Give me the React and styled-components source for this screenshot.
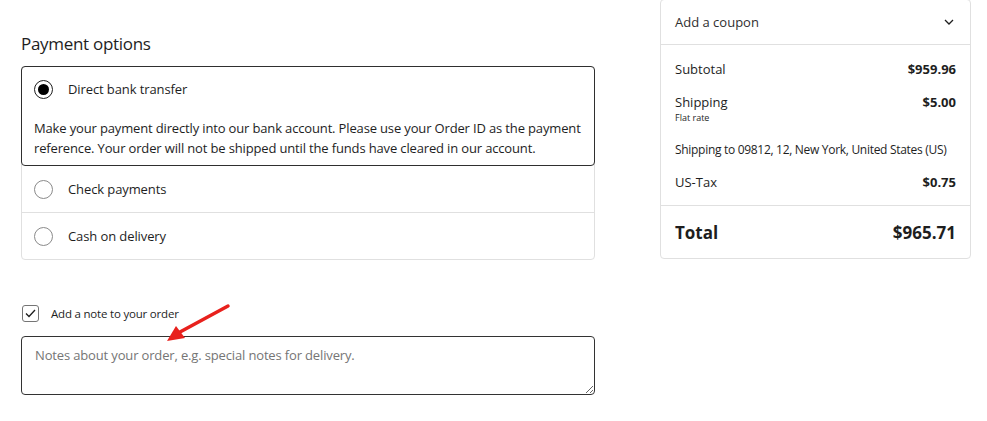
import React from "react";
import styled, { createGlobalStyle } from "styled-components";

const Global = createGlobalStyle`
  html, body { margin: 0; padding: 0; background: #fff; }
  body { font-family: "Open Sans", "Noto Sans", sans-serif; color: #1e1e1e; }
  * { box-sizing: border-box; }
`;

const Page = styled.div`
  display: flex;
  align-items: flex-start;
  width: 987px;
  height: 421px;
  overflow: hidden;
  padding-left: 21px;
`;

const Left = styled.div`
  width: 574px;
  padding-top: 31px;
  position: relative;
`;

const Heading = styled.h2`
  margin: 0 0 9px;
  font-size: 17px;
  font-weight: 400;
  line-height: 26px;
  letter-spacing: -0.3px;
`;

const Options = styled.div`
  border: 1px solid #e0e0e0;
  border-radius: 4px;
`;

const Option = styled.div`
  margin: ${(p) => (p.$selected ? "-1px -1px 0" : "0")};
  border-top: ${(p) => (p.$first ? "none" : "1px solid #e0e0e0")};
  ${(p) => (p.$selected ? "border: 1.5px solid #2f2f2f; border-radius: 4px;" : "")}
  padding: ${(p) => (p.$selected ? "11px 12px 7px" : "12px 12px")};
`;

const OptionHead = styled.label`
  display: flex;
  align-items: center;
  gap: 15px;
  height: 22px;
  font-size: 13px;
  letter-spacing: -0.1px;
`;

const Radio = styled.span`
  width: 19px;
  height: 19px;
  border-radius: 50%;
  border: 1px solid ${(p) => (p.$on ? "#1e1e1e" : "#8a8a8a")};
  display: flex;
  align-items: center;
  justify-content: center;
  flex-shrink: 0;
  &::after {
    content: "";
    width: 11px;
    height: 11px;
    border-radius: 50%;
    background: ${(p) => (p.$on ? "#000" : "transparent")};
  }
`;

const Desc = styled.p`
  margin: 18px 0 0;
  font-size: 13px;
  line-height: 20px;
  letter-spacing: -0.15px;
`;

const NoteCheck = styled.label`
  display: flex;
  align-items: center;
  gap: 12px;
  margin-top: 45px;
  font-size: 11.5px;
  letter-spacing: -0.2px;
  padding-left: 1px;
`;

const Box = styled.span`
  width: 17px;
  height: 17px;
  border: 1px solid #757575;
  border-radius: 3px;
  display: flex;
  align-items: center;
  justify-content: center;
`;

const Notes = styled.textarea`
  display: block;
  margin-top: 14px;
  width: 574px;
  height: 59px;
  border: 1px solid #333;
  border-radius: 4px;
  padding: 9px 13px;
  font-family: inherit;
  font-size: 13px;
  letter-spacing: -0.15px;
  color: #1e1e1e;
  outline: none;
  &::placeholder { color: #757575; }
`;

const Arrow = styled.svg`
  position: absolute;
  left: 129px;
  top: 300px;
`;

const Card = styled.aside`
  margin-left: 65px;
  margin-top: -1px;
  width: 311px;
  border: 1px solid #e0e0e0;
  border-radius: 4px;
  font-size: 13px;
`;

const Coupon = styled.div`
  display: flex;
  align-items: center;
  justify-content: space-between;
  height: 45px;
  padding: 0 16px 0 14px;
  border-bottom: 1px solid #e0e0e0;
  color: #2f2f2f;
`;

const Items = styled.div`
  padding: 14px 14px 13px;
  border-bottom: 1px solid #e0e0e0;
`;

const Row = styled.div`
  display: flex;
  justify-content: space-between;
  align-items: baseline;
  line-height: 20px;
  margin-bottom: ${(p) => p.$mb || 0}px;
`;

const Amount = styled.span`
  font-weight: 700;
`;

const Small = styled.div`
  font-size: 9px;
  line-height: 11px;
  margin-bottom: 18px;
`;

const Note = styled.div`
  font-size: 12px;
  line-height: 18px;
  letter-spacing: -0.3px;
  margin-bottom: 13px;
`;

const Total = styled.div`
  display: flex;
  justify-content: space-between;
  align-items: center;
  height: 52px;
  padding: 0 14px;
  font-size: 17px;
  font-weight: 700;
`;

export default function App() {
  return (
    <Page>
      <Global />
      <Left>
        <Heading>Payment options</Heading>
        <Options>
          <Option $selected>
            <OptionHead>
              <Radio $on />
              Direct bank transfer
            </OptionHead>
            <Desc>
              Make your payment directly into our bank account. Please use your Order ID as the payment
              reference. Your order will not be shipped until the funds have cleared in our account.
            </Desc>
          </Option>
          <Option $first>
            <OptionHead>
              <Radio />
              Check payments
            </OptionHead>
          </Option>
          <Option>
            <OptionHead>
              <Radio />
              Cash on delivery
            </OptionHead>
          </Option>
        </Options>
        <NoteCheck>
          <Box>
            <svg width="11" height="9" viewBox="0 0 11 9">
              <path d="M1 4.5 L4 7.5 L10 1" fill="none" stroke="#1e1e1e" strokeWidth="1.3" />
            </svg>
          </Box>
          Add a note to your order
        </NoteCheck>
        <Notes placeholder="Notes about your order, e.g. special notes for delivery." />
        <Arrow width="90" height="48" viewBox="0 0 90 48">
          <line x1="78" y1="6" x2="30" y2="32" stroke="#e8211d" strokeWidth="3.5" strokeLinecap="round" />
          <polygon points="17,41 26,26 35,38" fill="#e8211d" />
        </Arrow>
      </Left>
      <Card>
        <Coupon>
          Add a coupon
          <svg width="10" height="6" viewBox="0 0 10 6">
            <path d="M1 1 L5 5 L9 1" fill="none" stroke="#1e1e1e" strokeWidth="1.3" />
          </svg>
        </Coupon>
        <Items>
          <Row $mb={13}>
            <span>Subtotal</span>
            <Amount>$959.96</Amount>
          </Row>
          <Row>
            <span>Shipping</span>
            <Amount>$5.00</Amount>
          </Row>
          <Small>Flat rate</Small>
          <Note>Shipping to 09812, 12, New York, United States (US)</Note>
          <Row>
            <span>US-Tax</span>
            <Amount>$0.75</Amount>
          </Row>
        </Items>
        <Total>
          <span>Total</span>
          <span>$965.71</span>
        </Total>
      </Card>
    </Page>
  );
}
